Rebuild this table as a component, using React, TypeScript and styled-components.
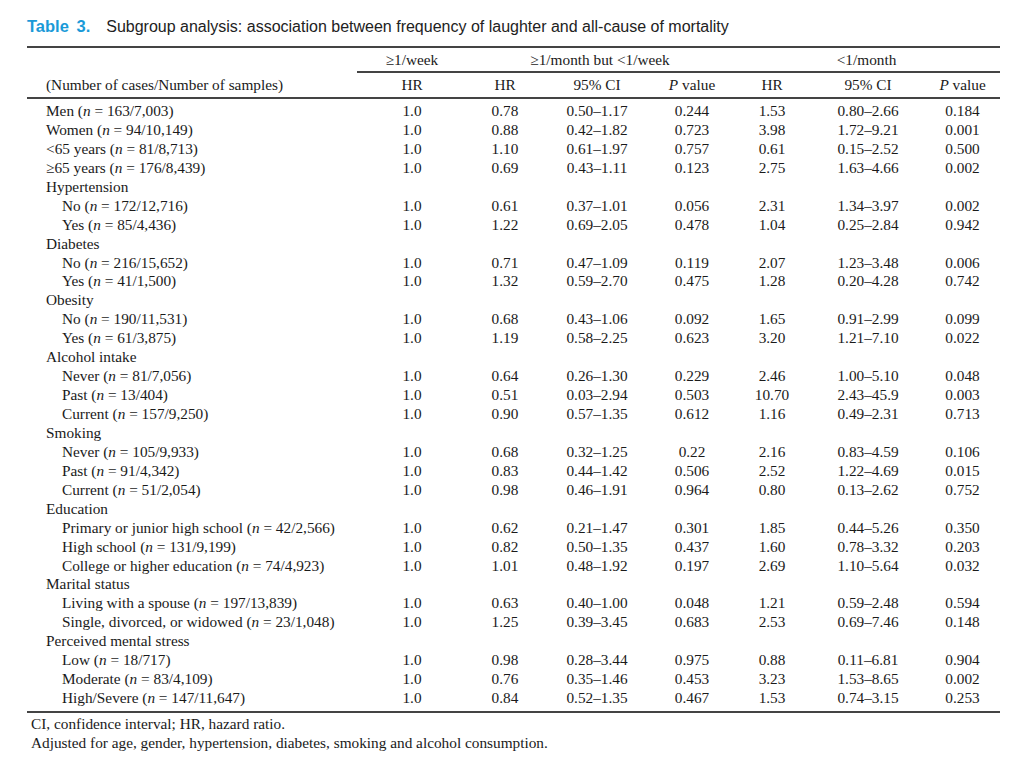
import React from "react";
import styled, { createGlobalStyle } from "styled-components";

const Global = createGlobalStyle`
  html, body { margin: 0; padding: 0; background: #ffffff; }
  body { font-family: "Liberation Serif", "Times New Roman", serif; color: #1a1a1a; }
`;

const Page = styled.div`
  width: 1024px;
  height: 770px;
  padding: 17px 24px 0 27px;
  box-sizing: border-box;
`;

const Caption = styled.div`
  font-family: "Liberation Sans", Arial, sans-serif;
  font-size: 16px;
  line-height: 19px;
  color: #222;
  display: flex;
  gap: 16px;
  margin-bottom: 10px;
`;

const CaptionLabel = styled.span`
  color: #1a9ad8;
  font-weight: bold;
  font-size: 16.5px;
  word-spacing: 3px;
`;

const Table = styled.table`
  width: 973px;
  border-collapse: collapse;
  font-size: 15.3px;
  table-layout: fixed;
  border-top: 2px solid #444;
  border-bottom: 2px solid #444;
`;

const GroupHead = styled.th<{ $line?: boolean }>`
  font-weight: normal;
  text-align: center;
  height: 23px;
  padding: 0;
  white-space: nowrap;
  border-bottom: ${(p) => (p.$line ? "2px solid #444" : "none")};
`;

const ColHead = styled.th<{ $left?: boolean }>`
  font-weight: normal;
  text-align: ${(p) => (p.$left ? "left" : "center")};
  padding: ${(p) => (p.$left ? "0 0 0 19px" : "0")};
  height: 24px;
  white-space: nowrap;
  border-bottom: 2px solid #444;
`;

const Row = styled.tr`
  height: 18.94px;
  &:first-child td { padding-top: 3px; }
  &:last-child td { padding-bottom: 3px; }
`;

const Label = styled.td<{ $sub?: boolean }>`
  padding: 0 0 0 ${(p) => (p.$sub ? "35px" : "19px")};
  white-space: nowrap;
  line-height: 18.94px;
`;

const Cell = styled.td`
  text-align: center;
  padding: 0;
  line-height: 18.94px;
`;

const Notes = styled.div`
  font-size: 15.3px;
  line-height: 19px;
  padding: 1px 0 0 4px;
`;

type R = { label: React.ReactNode; sub?: boolean; v?: string[] };

const n = (pre: string, rest: string): React.ReactNode => (
  <>
    {pre} (<i>n</i> = {rest})
  </>
);

const rows: R[] = [
  { label: n("Men", "163/7,003"), v: ["1.0", "0.78", "0.50–1.17", "0.244", "1.53", "0.80–2.66", "0.184"] },
  { label: n("Women", "94/10,149"), v: ["1.0", "0.88", "0.42–1.82", "0.723", "3.98", "1.72–9.21", "0.001"] },
  { label: n("<65 years", "81/8,713"), v: ["1.0", "1.10", "0.61–1.97", "0.757", "0.61", "0.15–2.52", "0.500"] },
  { label: n("≥65 years", "176/8,439"), v: ["1.0", "0.69", "0.43–1.11", "0.123", "2.75", "1.63–4.66", "0.002"] },
  { label: "Hypertension" },
  { label: n("No", "172/12,716"), sub: true, v: ["1.0", "0.61", "0.37–1.01", "0.056", "2.31", "1.34–3.97", "0.002"] },
  { label: n("Yes", "85/4,436"), sub: true, v: ["1.0", "1.22", "0.69–2.05", "0.478", "1.04", "0.25–2.84", "0.942"] },
  { label: "Diabetes" },
  { label: n("No", "216/15,652"), sub: true, v: ["1.0", "0.71", "0.47–1.09", "0.119", "2.07", "1.23–3.48", "0.006"] },
  { label: n("Yes", "41/1,500"), sub: true, v: ["1.0", "1.32", "0.59–2.70", "0.475", "1.28", "0.20–4.28", "0.742"] },
  { label: "Obesity" },
  { label: n("No", "190/11,531"), sub: true, v: ["1.0", "0.68", "0.43–1.06", "0.092", "1.65", "0.91–2.99", "0.099"] },
  { label: n("Yes", "61/3,875"), sub: true, v: ["1.0", "1.19", "0.58–2.25", "0.623", "3.20", "1.21–7.10", "0.022"] },
  { label: "Alcohol intake" },
  { label: n("Never", "81/7,056"), sub: true, v: ["1.0", "0.64", "0.26–1.30", "0.229", "2.46", "1.00–5.10", "0.048"] },
  { label: n("Past", "13/404"), sub: true, v: ["1.0", "0.51", "0.03–2.94", "0.503", "10.70", "2.43–45.9", "0.003"] },
  { label: n("Current", "157/9,250"), sub: true, v: ["1.0", "0.90", "0.57–1.35", "0.612", "1.16", "0.49–2.31", "0.713"] },
  { label: "Smoking" },
  { label: n("Never", "105/9,933"), sub: true, v: ["1.0", "0.68", "0.32–1.25", "0.22", "2.16", "0.83–4.59", "0.106"] },
  { label: n("Past", "91/4,342"), sub: true, v: ["1.0", "0.83", "0.44–1.42", "0.506", "2.52", "1.22–4.69", "0.015"] },
  { label: n("Current", "51/2,054"), sub: true, v: ["1.0", "0.98", "0.46–1.91", "0.964", "0.80", "0.13–2.62", "0.752"] },
  { label: "Education" },
  { label: n("Primary or junior high school", "42/2,566"), sub: true, v: ["1.0", "0.62", "0.21–1.47", "0.301", "1.85", "0.44–5.26", "0.350"] },
  { label: n("High school", "131/9,199"), sub: true, v: ["1.0", "0.82", "0.50–1.35", "0.437", "1.60", "0.78–3.32", "0.203"] },
  { label: n("College or higher education", "74/4,923"), sub: true, v: ["1.0", "1.01", "0.48–1.92", "0.197", "2.69", "1.10–5.64", "0.032"] },
  { label: "Marital status" },
  { label: n("Living with a spouse", "197/13,839"), sub: true, v: ["1.0", "0.63", "0.40–1.00", "0.048", "1.21", "0.59–2.48", "0.594"] },
  { label: n("Single, divorced, or widowed", "23/1,048"), sub: true, v: ["1.0", "1.25", "0.39–3.45", "0.683", "2.53", "0.69–7.46", "0.148"] },
  { label: "Perceived mental stress" },
  { label: n("Low", "18/717"), sub: true, v: ["1.0", "0.98", "0.28–3.44", "0.975", "0.88", "0.11–6.81", "0.904"] },
  { label: n("Moderate", "83/4,109"), sub: true, v: ["1.0", "0.76", "0.35–1.46", "0.453", "3.23", "1.53–8.65", "0.002"] },
  { label: n("High/Severe", "147/11,647"), sub: true, v: ["1.0", "0.84", "0.52–1.35", "0.467", "1.53", "0.74–3.15", "0.253"] },
];

const widths = [330, 110, 76, 108, 82, 78, 114, 75];

export default function App() {
  return (
    <Page>
      <Global />
      <Caption>
        <CaptionLabel>Table 3.</CaptionLabel>
        <span>Subgroup analysis: association between frequency of laughter and all-cause of mortality</span>
      </Caption>
      <Table>
        <colgroup>
          {widths.map((w, i) => (
            <col key={i} style={{ width: w }} />
          ))}
        </colgroup>
        <thead>
          <tr>
            <GroupHead />
            <GroupHead $line>≥1/week</GroupHead>
            <GroupHead $line colSpan={3}>≥1/month but &lt;1/week</GroupHead>
            <GroupHead $line colSpan={3}>&lt;1/month</GroupHead>
          </tr>
          <tr>
            <ColHead $left>(Number of cases/Number of samples)</ColHead>
            <ColHead>HR</ColHead>
            <ColHead>HR</ColHead>
            <ColHead>95% CI</ColHead>
            <ColHead>
              <i>P</i> value
            </ColHead>
            <ColHead>HR</ColHead>
            <ColHead>95% CI</ColHead>
            <ColHead>
              <i>P</i> value
            </ColHead>
          </tr>
        </thead>
        <tbody>
          {rows.map((r, i) => (
            <Row key={i}>
              <Label $sub={r.sub}>{r.label}</Label>
              {(r.v ?? ["", "", "", "", "", "", ""]).map((c, j) => (
                <Cell key={j}>{c}</Cell>
              ))}
            </Row>
          ))}
        </tbody>
      </Table>
      <Notes>
        <div>CI, confidence interval; HR, hazard ratio.</div>
        <div>Adjusted for age, gender, hypertension, diabetes, smoking and alcohol consumption.</div>
      </Notes>
    </Page>
  );
}
